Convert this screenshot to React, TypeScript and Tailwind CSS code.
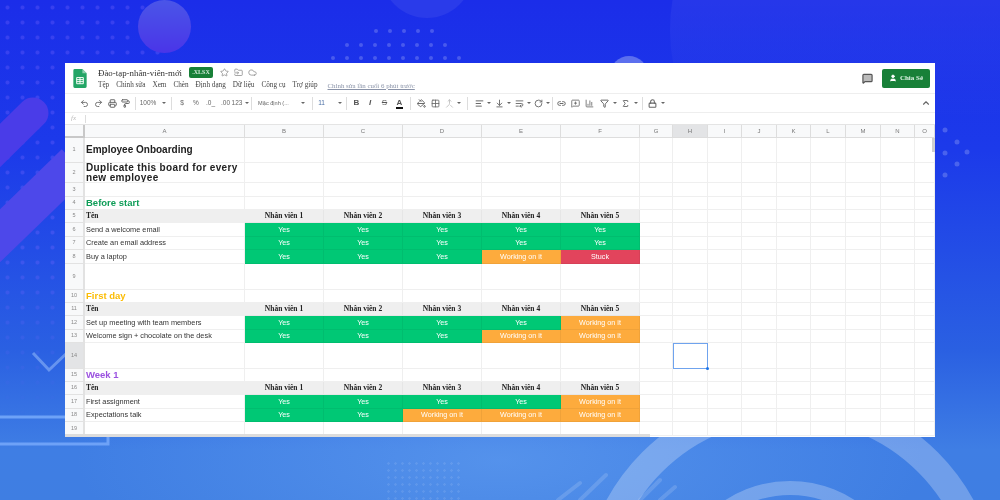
import { Fragment } from 'react';
import {
  Undo2,
  Redo2,
  Printer,
  PaintRoller,
  ChevronUp,
  Star,
  FolderInput,
  Cloud,
  PaintBucket,
  Grid2x2,
  Merge,
  AlignLeft,
  ArrowDownToLine,
  WrapText,
  RotateCw,
  Link2,
  MessageSquarePlus,
  ChartColumn,
  Filter,
  Sigma,
  Lock,
  MessageSquare,
  User,
} from 'lucide-react';

const COLS: [string, number][] = [
  ['A', 160], ['B', 79], ['C', 79], ['D', 79], ['E', 79], ['F', 79], ['G', 33], ['H', 35],
  ['I', 34], ['J', 35], ['K', 34], ['L', 35], ['M', 35], ['N', 34], ['O', 20],
];

const Y = 'Yes';
const W = 'Working on it';
const S = 'Stuck';

const HEAD = ['Nhân viên 1', 'Nhân viên 2', 'Nhân viên 3', 'Nhân viên 4', 'Nhân viên 5'];

type Row = {
  h: number;
  title?: string;
  kind?: 'big' | 'big2' | 'green' | 'yellow' | 'purple' | 'head' | 'task';
  cells?: string[];
};

const ROWS: Row[] = [
  { h: 25, title: 'Employee Onboarding', kind: 'big' },
  { h: 20, title: 'Duplicate this board for every new employee', kind: 'big2' },
  { h: 14 },
  { h: 13, title: 'Before start', kind: 'green' },
  { h: 13, title: 'Tên', kind: 'head', cells: HEAD },
  { h: 14, title: 'Send a welcome email', kind: 'task', cells: [Y, Y, Y, Y, Y] },
  { h: 13, title: 'Create an email address', kind: 'task', cells: [Y, Y, Y, Y, Y] },
  { h: 14, title: 'Buy a laptop', kind: 'task', cells: [Y, Y, Y, W, S] },
  { h: 26 },
  { h: 13, title: 'First day', kind: 'yellow' },
  { h: 13, title: 'Tên', kind: 'head', cells: HEAD },
  { h: 14, title: 'Set up meeting with team members', kind: 'task', cells: [Y, Y, Y, Y, W] },
  { h: 13, title: 'Welcome sign + chocolate on the desk', kind: 'task', cells: [Y, Y, Y, W, W] },
  { h: 26 },
  { h: 13, title: 'Week 1', kind: 'purple' },
  { h: 13, title: 'Tên', kind: 'head', cells: HEAD },
  { h: 14, title: 'First assignment', kind: 'task', cells: [Y, Y, Y, Y, W] },
  { h: 13, title: 'Expectations talk', kind: 'task', cells: [Y, Y, W, W, W] },
  { h: 14 },
];

const TITLE_STYLES: Record<string, string> = {
  big: 'text-[10px] font-bold text-[#222]',
  big2: 'text-[10px] font-bold text-[#222] leading-[9.5px] tracking-[0.35px] items-end',
  green: 'text-[9.5px] font-bold text-[#0f9d58]',
  yellow: 'text-[9.5px] font-bold text-[#fbbc04]',
  purple: 'text-[9.5px] font-bold text-[#9b51e0]',
  head: 'text-[7.5px] font-bold text-[#222] font-["Liberation_Serif",serif]',
  task: 'text-[7.35px] text-[#333]',
};

const STATUS_STYLES: Record<string, string> = {
  Yes: 'bg-[#00c875]',
  'Working on it': 'bg-[#fdab3d]',
  Stuck: 'bg-[#e2445c]',
};

// staggered dot rows above the sheet and the few on the right edge
const TOP_DOTS: [number, number, number][] = [
  [31, 376, 5],
  [45, 347, 8],
  [58, 333, 10],
];
const RIGHT_DOTS: [number, number][] = [
  [945, 130], [957, 142], [967, 152], [945, 153], [957, 164], [945, 175],
];

function Caret() {
  return <span className="h-0 w-0 border-x-[2px] border-t-[2.5px] border-x-transparent border-t-[#666]" />;
}

function Sep() {
  return <span className="h-[13px] w-px bg-[#ddd]" />;
}

function Tool({ w, children }: { w: number; children?: React.ReactNode }) {
  return (
    <div className="flex shrink-0 items-center justify-center gap-[3px] text-[#666]" style={{ width: w }}>
      {children}
    </div>
  );
}

function Toolbar() {
  const ic = 'size-[9px]';
  return (
    <div className="flex h-5 shrink-0 items-center border-y border-[#eee] pl-[12px] pr-[2px] font-['Liberation_Sans',sans-serif] text-[6.5px] text-[#777]">
      <Tool w={14}><Undo2 className={ic} strokeWidth={2.4} /></Tool>
      <Tool w={14}><Redo2 className={ic} strokeWidth={2.4} /></Tool>
      <Tool w={14}><Printer className={ic} strokeWidth={2.6} /></Tool>
      <Tool w={13}><PaintRoller className={ic} strokeWidth={2.6} /></Tool>
      <Tool w={6}><Sep /></Tool>
      <Tool w={30}><span>100%</span><span className="ml-[3px] flex"><Caret /></span></Tool>
      <Tool w={7}><Sep /></Tool>
      <Tool w={14}><span>$</span></Tool>
      <Tool w={14}><span>%</span></Tool>
      <Tool w={15}><span>.0_</span></Tool>
      <Tool w={15}><span>.00</span></Tool>
      <Tool w={15}><span>123</span><Caret /></Tool>
      <Tool w={6}><Sep /></Tool>
      <Tool w={52}><span className="ml-[3px] text-[5.6px]">Mặc định (...</span><span className="ml-[9px] flex"><Caret /></span></Tool>
      <Tool w={12}><Sep /></Tool>
      <Tool w={24}><span className="text-[#4a6fa5]">11</span><span className="ml-[10px] flex"><Caret /></span></Tool>
      <Tool w={8}><Sep /></Tool>
      <Tool w={13}><span className="text-[8px] font-bold text-[#555]">B</span></Tool>
      <Tool w={14}><span className="text-[8px] font-bold italic text-[#555]">I</span></Tool>
      <Tool w={15}><span className="text-[8px] text-[#555] line-through">S</span></Tool>
      <Tool w={15}>
        <span className="border-b-2 border-[#111] px-[1px] text-[8px] leading-[9px] font-bold text-[#555]">A</span>
      </Tool>
      <Tool w={7}><Sep /></Tool>
      <Tool w={14}><PaintBucket className={ic} strokeWidth={2.6} /></Tool>
      <Tool w={14}><Grid2x2 className={ic} strokeWidth={2.2} /></Tool>
      <Tool w={14}><Merge className={`${ic} text-[#bbb]`} strokeWidth={2.2} /></Tool>
      <Tool w={6}><Caret /></Tool>
      <Tool w={11}><Sep /></Tool>
      <Tool w={20}><AlignLeft className={ic} strokeWidth={2.6} /><Caret /></Tool>
      <Tool w={20}><ArrowDownToLine className={ic} strokeWidth={2.4} /><Caret /></Tool>
      <Tool w={19}><WrapText className={ic} strokeWidth={2.4} /><Caret /></Tool>
      <Tool w={19}><RotateCw className={ic} strokeWidth={2.4} /><Caret /></Tool>
      <Tool w={3}><Sep /></Tool>
      <Tool w={14}><Link2 className={ic} strokeWidth={2.6} /></Tool>
      <Tool w={14}><MessageSquarePlus className={ic} strokeWidth={2.2} /></Tool>
      <Tool w={14}><ChartColumn className={ic} strokeWidth={2.2} /></Tool>
      <Tool w={16}><Filter className={ic} strokeWidth={2.6} /></Tool>
      <Tool w={6}><Caret /></Tool>
      <Tool w={15}><Sigma className={ic} strokeWidth={2.4} /></Tool>
      <Tool w={5}><Caret /></Tool>
      <Tool w={8}><Sep /></Tool>
      <Tool w={12}><Lock className={ic} strokeWidth={2.8} /></Tool>
      <Tool w={10}><Caret /></Tool>
      <div className="flex-1" />
      <Tool w={14}><ChevronUp className="size-[10px]" strokeWidth={2.6} /></Tool>
    </div>
  );
}

function Sheet() {
  return (
    <div
      className="grid font-['Liberation_Sans',sans-serif] leading-none"
      style={{
        gridTemplateColumns: `20px ${COLS.map(c => c[1] + 'px').join(' ')}`,
        gridTemplateRows: `13px ${ROWS.map(r => r.h + 'px').join(' ')}`,
      }}
    >
      <div className="border-b-2 border-r-2 border-[#c8c8c8] bg-[#f8f9fa]" />
      {COLS.map(([name]) => (
        <div
          key={name}
          className={
            'flex items-center justify-center border-b border-r border-[#ddd] text-[6px] text-[#777] ' +
            (name === 'H' ? 'bg-[#e3e4e6]' : 'bg-[#f8f9fa]')
          }
        >
          {name}
        </div>
      ))}
      {ROWS.map((row, i) => (
        <Fragment key={i}>
          <div
            className={
              'flex items-center justify-center border-b border-r-2 border-[#e2e2e2] text-[5.5px] text-[#888] ' +
              (i === 13 ? 'bg-[#e3e4e6]' : 'bg-[#f8f9fa]')
            }
          >
            {i + 1}
          </div>
          <div
            className={
              'flex items-center overflow-hidden border-b border-r border-[#efefef] px-[1px] ' +
              (row.kind === 'head' ? 'bg-[#efefef] ' : '') +
              (row.kind ? TITLE_STYLES[row.kind] : '')
            }
          >
            {row.title}
          </div>
          {[0, 1, 2, 3, 4].map(c => {
            const val = row.cells?.[c];
            if (row.kind === 'head') {
              return (
                <div key={c} className="flex items-center justify-center border-b border-r border-[#e6e6e6] bg-[#efefef] font-['Liberation_Serif',serif] text-[7.5px] font-bold text-[#222]">
                  {val}
                </div>
              );
            }
            if (val) {
              return (
                <div key={c} className={'flex items-center justify-center border-b border-r border-black/5 text-[7.2px] text-white ' + STATUS_STYLES[val]}>
                  {val}
                </div>
              );
            }
            return <div key={c} className="border-b border-r border-[#efefef]" />;
          })}
          {COLS.slice(6).map(([name]) =>
            i === 13 && name === 'H' ? (
              <div key={name} className="relative border border-[#6fa3ee]">
                <span className="absolute -bottom-[2px] -right-[2px] size-[3px] rounded-full bg-[#1a73e8]" />
              </div>
            ) : (
              <div key={name} className="border-b border-r border-[#efefef]" />
            ),
          )}
        </Fragment>
      ))}
    </div>
  );
}

function Backdrop() {
  return (
    <div className="absolute inset-0 overflow-hidden bg-[linear-gradient(180deg,#1b2de9_0%,#1c3aea_30%,#2a60e2_70%,#3f7ee4_90%,#3f7ee2_100%)]">
      <div className="absolute inset-x-0 bottom-0 h-[200px] bg-[radial-gradient(ellipse_at_50%_80%,rgba(110,170,245,0.45),transparent_60%)]" />
      <div className="absolute left-0 top-0 h-[420px] w-[170px] bg-[radial-gradient(circle,rgba(125,105,255,0.3)_1.5px,transparent_2.5px)] bg-[length:15px_15px] [mask-image:linear-gradient(180deg,black_60%,transparent)]" />
      <div className="absolute left-[138px] top-0 size-[53px] rounded-full bg-[linear-gradient(180deg,#4a55e8,#4a35e8)]" />
      <div className="absolute -top-[74px] left-[381px] size-[92px] rounded-full bg-[#2a3bea]" />
      <div className="absolute -top-[150px] left-[670px] size-[360px] rounded-full bg-[linear-gradient(180deg,rgba(255,255,255,0.05)_40%,transparent_75%)]" />
      <div className="absolute left-[610px] top-[56px] size-[38px] rounded-full bg-[#5c6fee]" />
      <svg className="absolute inset-0" width="1000" height="500" viewBox="0 0 1000 500" fill="none">
        <path d="M33 113 L-25 170" stroke="#4a3ce8" strokeWidth="31" strokeLinecap="round" />
        <path d="M75 163 L-30 265" stroke="#4d48ea" strokeWidth="38" />
        <path d="M33 353 L49 370 L68 352" stroke="#7fa8f5" strokeOpacity="0.7" strokeWidth="3" />
        <path d="M0 417 H66" stroke="#6ea2f7" strokeWidth="3" />
        <path d="M0 444 H108 V437" stroke="#6ea2f7" strokeWidth="3" />
        <circle cx="790" cy="600" r="195" stroke="#ffffff" strokeOpacity="0.25" strokeWidth="28" />
        <circle cx="790" cy="600" r="112" stroke="#ffffff" strokeOpacity="0.25" strokeWidth="14" />
        <g stroke="#ffffff" strokeOpacity="0.14" strokeWidth="4" strokeLinecap="round">
          <path d="M558 500 L580 483" />
          <path d="M580 500 L606 475" />
          <path d="M640 500 L660 480" />
          <path d="M660 500 L675 487" />
        </g>
        <g fill="#ffffff" fillOpacity="0.2">
          {TOP_DOTS.flatMap(([y, x, n]) =>
            Array.from({ length: n }, (_, k) => <circle key={`${y}-${k}`} cx={x + k * 14} cy={y} r="2" />),
          )}
          {RIGHT_DOTS.map(([x, y]) => (
            <circle key={`${x}-${y}`} cx={x} cy={y} r="2.5" />
          ))}
        </g>
      </svg>
      <div className="absolute left-[385px] top-[460px] h-[40px] w-[75px] bg-[radial-gradient(circle,rgba(255,255,255,0.09)_1px,transparent_1.5px)] bg-[length:7px_7px]" />
    </div>
  );
}

export default function App() {
  return (
    <div className="relative h-[500px] w-[1000px] overflow-hidden">
      <Backdrop />
      <div className="absolute left-[65px] top-[63px] flex h-[374px] w-[870px] flex-col overflow-hidden bg-white blur-[0.35px]">
        <div className="flex h-[30px] shrink-0 items-center pl-[8px] pr-[5px]">
          <svg viewBox="0 0 14 20" className="h-[19px] w-[14px] shrink-0">
            <path d="M1.5 0H9.5L14 4.5V18.5a1.5 1.5 0 0 1-1.5 1.5h-11A1.5 1.5 0 0 1 0 18.5V1.5A1.5 1.5 0 0 1 1.5 0z" fill="#23a566" />
            <path d="M9.5 0L14 4.5H9.5z" fill="#8ed1b1" />
            <path d="M3.5 9h7v6.5h-7zM3.5 11.2h7M3.5 13.3h7M7 9v6.5" fill="none" stroke="#fff" strokeWidth="1" />
          </svg>
          <div className="ml-[11px] flex flex-col gap-[2px] font-['Liberation_Serif',serif]">
            <div className="flex items-center">
              <span className="text-[8.9px] leading-[12px] text-[#333]">Đào-tạp-nhân-viên-mới</span>
              <span className="ml-[7px] flex h-[11px] w-[24px] items-center justify-center rounded-[2px] bg-[#188038] text-[6px] font-bold text-[#cfe8d6]">.XLSX</span>
              <Star className="ml-[7px] size-[9px] text-[#888]" strokeWidth={2} />
              <FolderInput className="ml-[5px] size-[9px] text-[#888]" strokeWidth={2} />
              <Cloud className="ml-[5px] size-[9px] text-[#888]" strokeWidth={2} />
            </div>
            <div className="flex items-center text-[7.2px] leading-[9px] text-[#444]">
              <span>Tệp</span>
              <span className="ml-[7px]">Chỉnh sửa</span>
              <span className="ml-[7px]">Xem</span>
              <span className="ml-[7px]">Chèn</span>
              <span className="ml-[7px]">Định dạng</span>
              <span className="ml-[7px]">Dữ liệu</span>
              <span className="ml-[7px]">Công cụ</span>
              <span className="ml-[7px]">Trợ giúp</span>
              <span className="ml-[10px] text-[6.9px] text-[#8a93a8] underline">Chỉnh sửa lần cuối 6 phút trước</span>
            </div>
          </div>
          <div className="flex-1" />
          <MessageSquare className="size-[11px] fill-[#bbb] text-[#555]" strokeWidth={2.6} />
          <button className="ml-[9px] flex h-[19px] w-[48px] items-center justify-center gap-[3px] rounded-[2px] bg-[#188038] font-['Liberation_Serif',serif] text-[7px] font-bold text-[#dff3e6]">
            <User className="size-[8px] fill-white text-white" />
            Chia Sẻ
          </button>
        </div>
        <Toolbar />
        <div className="flex h-[12px] shrink-0 items-center border-b border-[#e4e4e4]">
          <span className="w-[20px] pl-[6px] font-['Liberation_Serif',serif] text-[7px] italic text-[#bbb]">fx</span>
          <span className="h-[8px] w-px bg-[#ddd]" />
        </div>
        <Sheet />
        <div className="absolute bottom-0 left-0 h-[3px] w-[585px] bg-[#dcdcdc]" />
        <div className="absolute right-0 top-[75px] h-[14px] w-[3px] bg-[#cfcfcf]" />
      </div>
    </div>
  );
}
